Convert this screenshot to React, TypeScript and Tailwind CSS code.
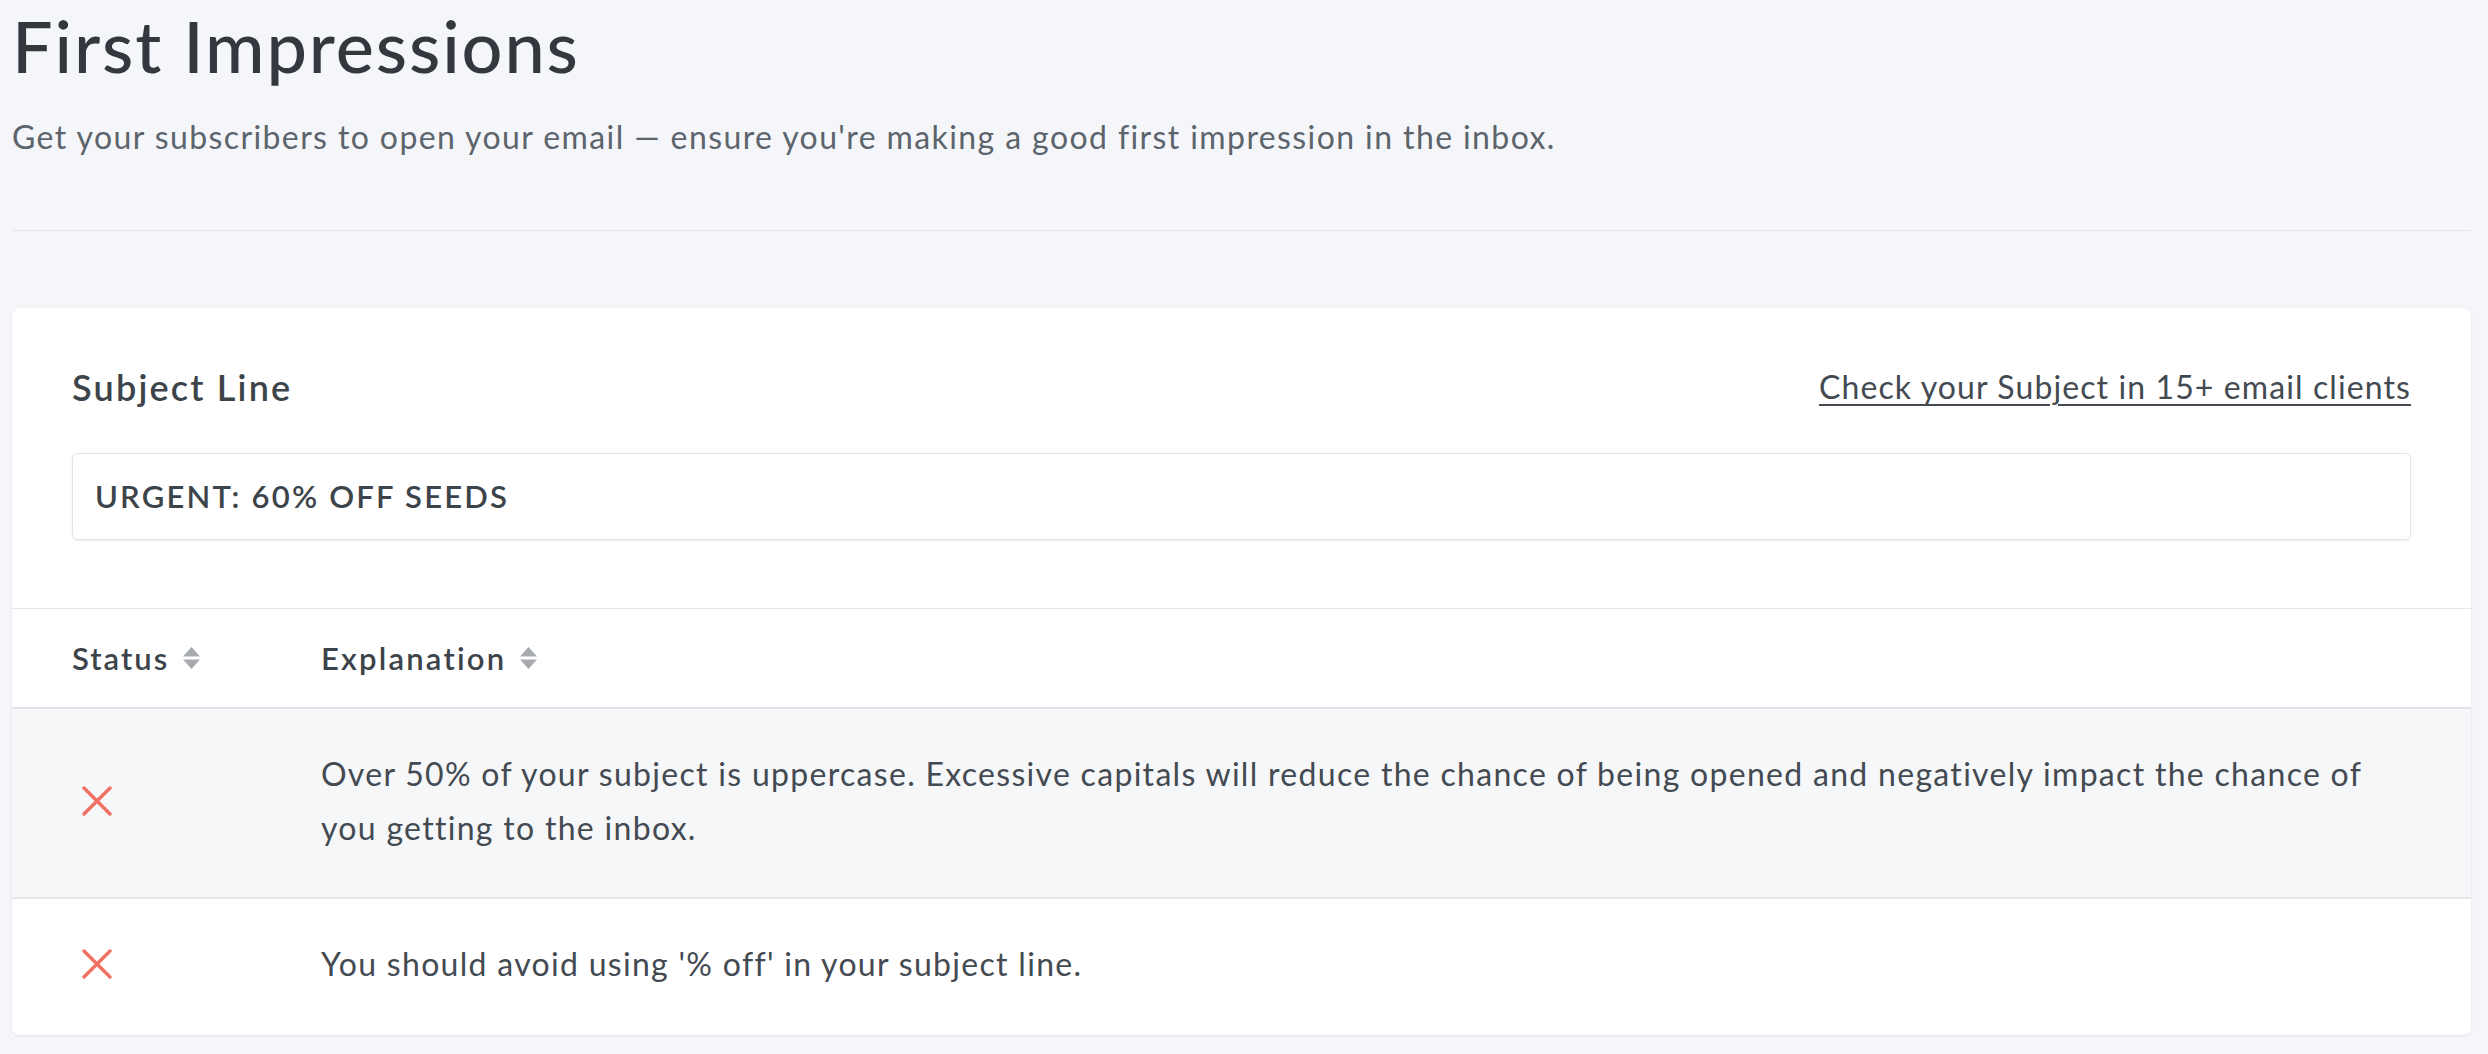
import React from 'react';

type Check = { id: number; passed: boolean; text: string };

const checks: Check[] = [
  {
    id: 1,
    passed: false,
    text: 'Over 50% of your subject is uppercase. Excessive capitals will reduce the chance of being opened and negatively impact the chance of you getting to the inbox.',
  },
  {
    id: 2,
    passed: false,
    text: "You should avoid using '% off' in your subject line.",
  },
];

function SortIcon() {
  return (
    <svg width="19" height="22" viewBox="0 0 19 22" className="ml-[13px] shrink-0" fill="#a7abb0">
      <path d="M9.5 0L18 9.5H1z" />
      <path d="M9.5 22L18 12.5H1z" />
    </svg>
  );
}

function CrossIcon() {
  return (
    <svg width="30" height="30" viewBox="0 0 30 30" fill="none" stroke="#f07063" strokeWidth="3.4" strokeLinecap="round">
      <path d="M2 2L28 28M28 2L2 28" />
    </svg>
  );
}

export default function App() {
  return (
    <div className="min-h-screen bg-[#f5f6fa] font-['Lato',sans-serif] text-[#434a51]">
      {/* Page Header */}
      <div className="pl-3 pr-[17px]">
        <h1 className="pt-[5px] text-[72px] leading-[80px] font-medium text-[#33383e] tracking-[1.9px]">
          First Impressions
        </h1>
        <p className="mt-[32px] text-[32px] leading-[40px] text-[#5c646c] tracking-[1.4px]">
          Get your subscribers to open your email — ensure you're making a good first impression in the inbox.
        </p>
        <div className="mt-[73px] border-t border-[#e3e5e9]" />
      </div>

      {/* Subject card */}
      <div className="ml-3 mr-[17px] mt-[77px] bg-white rounded-lg shadow-[0_1px_3px_rgba(30,40,60,0.1)] overflow-hidden">
        <div className="px-[60px] pt-[59px] pb-[68px] border-b border-[#e5e8eb]">
          <div className="flex items-center justify-between">
            <h2 className="text-[36px] leading-[40px] font-semibold text-[#3d4449] tracking-[2.2px]">Subject Line</h2>
            <a href="#" className="text-[32px] leading-[40px] text-[#434a51] tracking-[1.1px] underline underline-offset-[5px] decoration-[2px]">
              Check your Subject in 15+ email clients
            </a>
          </div>
          <div className="mt-[46px] h-[87px] flex items-center px-[22px] border border-[#e1e4e8] rounded-[5px] shadow-[0_1px_2px_rgba(30,40,60,0.08)]">
            <span className="text-[31px] font-semibold text-[#3d4449] tracking-[2.2px]">URGENT: 60% OFF SEEDS</span>
          </div>
        </div>

        {/* Table */}
        <div className="flex items-center h-[100px] px-[60px] border-b-2 border-[#dfe2e6] shadow-[0_2px_3px_rgba(30,40,60,0.05)]">
          <div className="w-[249px] flex items-center text-[31px] font-semibold text-[#3d4449] tracking-[2px]">
            Status
            <SortIcon />
          </div>
          <div className="flex items-center text-[31px] font-semibold text-[#3d4449] tracking-[2.2px]">
            Explanation
            <SortIcon />
          </div>
        </div>
        {checks.map((c, i) => (
          <div
            key={c.id}
            className={`flex items-center px-[60px] pt-[38px] ${
              i % 2 === 0 ? 'bg-[#f6f7f9]' : 'bg-white'
            } ${i < checks.length - 1 ? 'pb-[42px] border-b-2 border-[#e5e8eb]' : 'pb-[44px]'}`}
          >
            <div className="w-[249px] shrink-0 pl-[10px]">
              <CrossIcon />
            </div>
            <p className="flex-1 text-[32px] leading-[54px] text-[#434a51] tracking-[1.3px]">{c.text}</p>
          </div>
        ))}
      </div>
    </div>
  );
}
